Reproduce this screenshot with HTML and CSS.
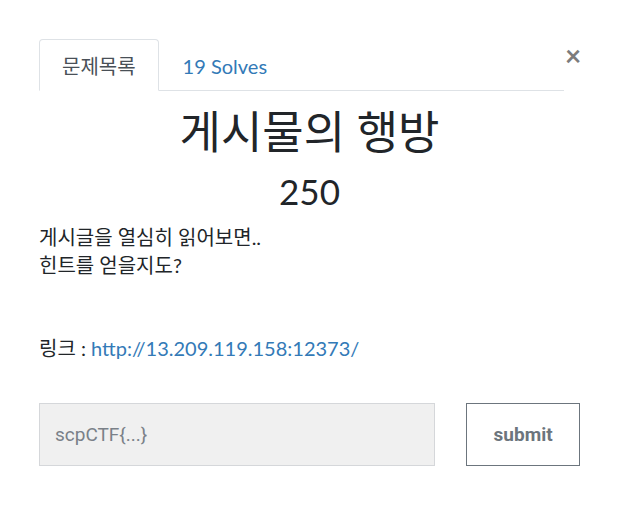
FILE: index.html
```html
<!DOCTYPE html>
<html lang="ko">
<head>
<meta charset="utf-8">
<link rel="stylesheet" href="styles.css">
</head>
<body>
<div class="modal">
  <div class="head">
    <ul class="tabs">
      <li class="tab active">문제목록</li>
      <li class="tab link">19 Solves</li>
    </ul>
    <button class="close" aria-label="Close">&times;</button>
  </div>
  <h2 class="title">게시물의 행방</h2>
  <h3 class="value">250</h3>
  <div class="desc">
    <p>게시글을 열심히 읽어보면..<br>힌트를 얻을지도?</p>
    <p class="linkline">링크 : <a href="#">http://13.209.119.158:12373/</a></p>
  </div>
  <form class="submit-row">
    <input class="flag" type="text" placeholder="scpCTF{...}">
    <button class="btn" type="button">submit</button>
  </form>
</div>
</body>
</html>
```
FILE: styles.css
```css
* { box-sizing: border-box; }
html, body { margin: 0; background: #fff; }
body {
  font-family: Lato, "Noto Sans CJK KR", sans-serif;
  color: #212529;
}
.modal {
  width: 621px;
  padding: 39px 41px 0 39px;
}
.head {
  display: flex;
  align-items: flex-start;
}
.tabs {
  list-style: none;
  margin: 0;
  padding: 0;
  display: flex;
  flex: 0 0 525px;
  width: 525px;
  border-bottom: 1px solid #dee2e6;
}
.tab {
  height: 52px;
  line-height: 52px;
  padding: 0 22px 0 23px;
  font-size: 20px;
  margin-bottom: -1px;
  border: 1px solid transparent;
  border-radius: 4px 4px 0 0;
}
.tab.active {
  color: #495057;
  background: #fff;
  border-color: #dee2e6 #dee2e6 #fff;
  padding: 0 22px 0 22px;
}
.tab.link { color: #337ab7; }
.close {
  margin-left: -1px;
  margin-top: 2px;
  border: 0;
  background: none;
  padding: 0 2px;
  font-family: Lato, sans-serif;
  font-size: 28px;
  line-height: 28px;
  font-weight: bold;
  color: #7c7c7c;
}
.title {
  margin: 14px 0 0;
  text-align: center;
  font-weight: 400;
  font-size: 45px;
  line-height: 54px;
}
.value {
  margin: 9px 0 0;
  text-align: center;
  font-weight: 400;
  font-size: 35px;
  line-height: 46px;
}
.desc {
  margin-top: 9px;
  font-size: 20px;
  line-height: 28px;
}
.desc p { margin: 0; }
.linkline { margin-top: 55px !important; }
.desc a { color: #337ab7; text-decoration: none; }
.submit-row {
  display: flex;
  margin-top: 41px;
}
.flag {
  width: 397px;
  height: 63px;
  background: #f0f0f0;
  border: 1px solid #d5d7da;
  padding: 0 15px;
  font-family: Roboto, sans-serif;
  font-size: 19px;
  color: #6c757d;
  margin: 0;
}
.flag::placeholder { color: #7a8088; }
.btn {
  margin-left: 31px;
  width: 114px;
  height: 63px;
  background: #fff;
  border: 1px solid #6c757d;
  font-family: Roboto, sans-serif;
  font-weight: bold;
  font-size: 19px;
  color: #6c757d;
}
```
